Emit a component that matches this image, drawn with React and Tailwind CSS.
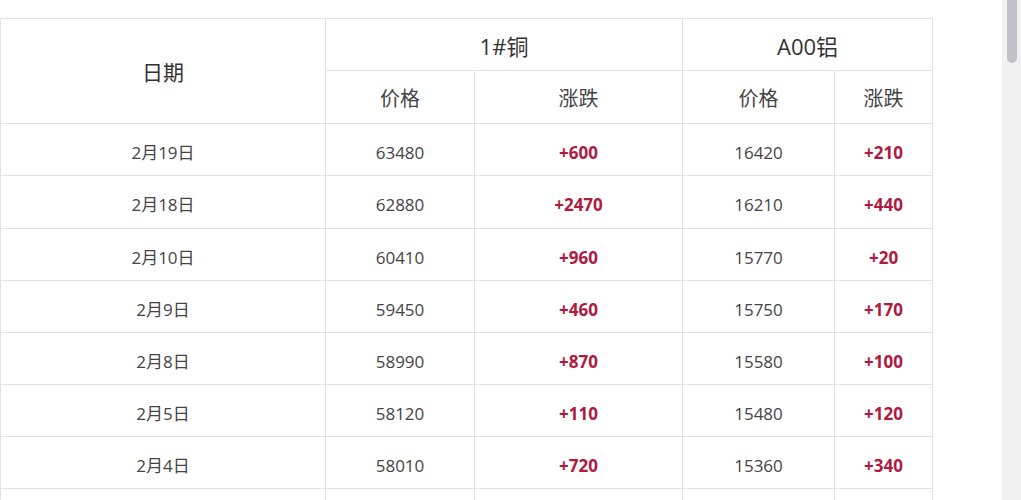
import React from "react";

const rows = [
    { date: "2月19日", cuPrice: "63480", cuChange: "+600", alPrice: "16420", alChange: "+210" },
    { date: "2月18日", cuPrice: "62880", cuChange: "+2470", alPrice: "16210", alChange: "+440" },
    { date: "2月10日", cuPrice: "60410", cuChange: "+960", alPrice: "15770", alChange: "+20" },
    { date: "2月9日", cuPrice: "59450", cuChange: "+460", alPrice: "15750", alChange: "+170" },
    { date: "2月8日", cuPrice: "58990", cuChange: "+870", alPrice: "15580", alChange: "+100" },
    { date: "2月5日", cuPrice: "58120", cuChange: "+110", alPrice: "15480", alChange: "+120" },
    { date: "2月4日", cuPrice: "58010", cuChange: "+720", alPrice: "15360", alChange: "+340" },
];

const cell = "border border-[#e2e2e2] pt-[6px] text-[17px] leading-[22px]";

const App = () => {
    return (
        <div className="flex h-[500px] w-full overflow-hidden bg-white font-['Open_Sans','Noto_Sans_CJK_SC',sans-serif]">
            <div className="flex-1 pt-[18px]">
                <table className="w-[932px] table-fixed border-collapse text-center">
                    <colgroup>
                        <col className="w-[325px]" />
                        <col className="w-[149px]" />
                        <col className="w-[208px]" />
                        <col className="w-[152px]" />
                        <col className="w-[98px]" />
                    </colgroup>
                    <thead>
                        <tr className="h-[52px]">
                            <th rowSpan={2} className="border border-[#e2e2e2] pt-[3px] text-[21px] font-normal text-[#333]">日期</th>
                            <th colSpan={2} className="border border-[#e2e2e2] pt-[3px] text-[22px] font-normal text-[#333]">1#铜</th>
                            <th colSpan={2} className="border border-[#e2e2e2] pt-[3px] text-[22px] font-normal text-[#333]">A00铝</th>
                        </tr>
                        <tr className="h-[53px]">
                            <th className="border border-[#e2e2e2] pt-[3px] text-[20px] font-normal text-[#444]">价格</th>
                            <th className="border border-[#e2e2e2] pt-[3px] text-[20px] font-normal text-[#444]">涨跌</th>
                            <th className="border border-[#e2e2e2] pt-[3px] text-[20px] font-normal text-[#444]">价格</th>
                            <th className="border border-[#e2e2e2] pt-[3px] text-[20px] font-normal text-[#444]">涨跌</th>
                        </tr>
                    </thead>
                    <tbody>
                        {rows.map((row, i) => (
                            <tr key={row.date} className={i === 1 ? "h-[53px]" : "h-[52px]"}>
                                <td className={`${cell} text-[#444]`}>{row.date}</td>
                                <td className={`${cell} text-[#444]`}>{row.cuPrice}</td>
                                <td className={`${cell} font-bold text-[#b01a3e]`}>{row.cuChange}</td>
                                <td className={`${cell} text-[#444]`}>{row.alPrice}</td>
                                <td className={`${cell} font-bold text-[#b01a3e]`}>{row.alChange}</td>
                            </tr>
                        ))}
                        {/* next row is cut off by the window */}
                        <tr className="h-[52px]">
                            <td className="border border-[#e2e2e2]" />
                            <td className="border border-[#e2e2e2]" />
                            <td className="border border-[#e2e2e2]" />
                            <td className="border border-[#e2e2e2]" />
                            <td className="border border-[#e2e2e2]" />
                        </tr>
                    </tbody>
                </table>
            </div>
            {/* scrollbar */}
            <div className="flex h-full w-[19px] shrink-0 justify-center bg-[#f1f1f1]">
                <div className="h-[63px] w-[10px] rounded-b-full bg-[#c1c1c8]" />
            </div>
        </div>
    );
};

export default App;
